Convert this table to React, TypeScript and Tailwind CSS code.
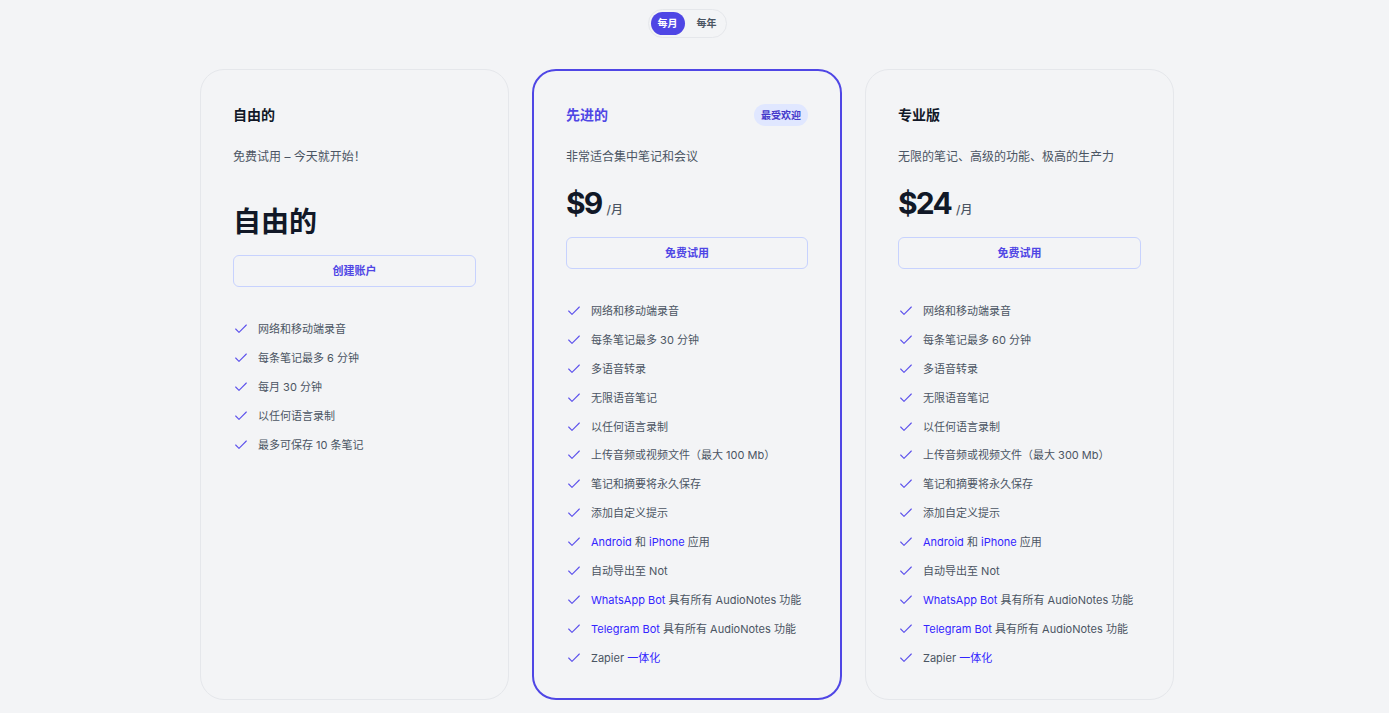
import React from "react";

type Part = { t: string; link?: boolean };
type Feature = Part[];

const f = (s: string): Feature => [{ t: s }];

const freeFeatures: Feature[] = [
  f("网络和移动端录音"),
  f("每条笔记最多 6 分钟"),
  f("每月 30 分钟"),
  f("以任何语言录制"),
  f("最多可保存 10 条笔记"),
];

const makePaid = (mins: string, mb: string): Feature[] => [
  f("网络和移动端录音"),
  f(`每条笔记最多 ${mins} 分钟`),
  f("多语音转录"),
  f("无限语音笔记"),
  f("以任何语言录制"),
  f(`上传音频或视频文件（最大 ${mb} Mb）`),
  f("笔记和摘要将永久保存"),
  f("添加自定义提示"),
  [
    { t: "Android", link: true },
    { t: " 和 " },
    { t: "iPhone", link: true },
    { t: " 应用" },
  ],
  f("自动导出至 Not"),
  [{ t: "WhatsApp Bot", link: true }, { t: " 具有所有 AudioNotes 功能" }],
  [{ t: "Telegram Bot", link: true }, { t: " 具有所有 AudioNotes 功能" }],
  [{ t: "Zapier " }, { t: "一体化", link: true }],
];

function CheckIcon() {
  return (
    <svg
      width="16"
      height="16"
      viewBox="0 0 24 24"
      fill="none"
      stroke="#5b50ec"
      strokeWidth="1.6"
      strokeLinecap="round"
      strokeLinejoin="round"
      className="shrink-0"
    >
      <path d="M20 6 9 17l-5-5" />
    </svg>
  );
}

function FeatureList({ items, mt }: { items: Feature[]; mt: string }) {
  return (
    <ul className={`${mt} flex flex-col gap-[8.9px]`}>
      {items.map((parts, i) => (
        <li key={i} className="flex items-center gap-[9px] leading-5 text-[11px] text-[#4b5563]">
          <CheckIcon />
          <span>
            {parts.map((p, j) =>
              p.link ? (
                <span key={j} className="text-[#3325ff]">
                  {p.t}
                </span>
              ) : (
                <span key={j}>{p.t}</span>
              )
            )}
          </span>
        </li>
      ))}
    </ul>
  );
}

function Button({ label }: { label: string }) {
  return (
    <button className="w-full h-8 rounded-md border border-[#c7d2fe] text-[11px] font-semibold text-[#4f46e5] bg-transparent">
      {label}
    </button>
  );
}

function Price({ amount }: { amount: string }) {
  return (
    <div className="mt-[19px] flex items-baseline h-9">
      <span className="text-[30px] leading-9 font-bold text-[#111827] tracking-[-0.06em]">{amount}</span>
      <span className="ml-[5px] text-xs font-medium text-[#4b5563]">/月</span>
    </div>
  );
}

export default function App() {
  return (
    <div
      className="min-h-screen w-full bg-[#f3f4f6] pr-[15px] pt-[9px] pb-[15px]"
      style={{ fontFamily: 'Inter, "Noto Sans CJK SC", sans-serif' }}
    >
      <div className="flex justify-center">
        <div className="flex items-center rounded-full border border-[#e5e7eb] bg-[#f3f4f6] p-[2px] pr-[9px] h-[29px]">
          <div className="h-[23px] px-[7px] rounded-full bg-[#4f46e5] text-white text-[10px] font-bold flex items-center">
            每月
          </div>
          <div className="pl-3 text-[10px] font-bold text-[#4b5563]">每年</div>
        </div>
      </div>

      <div className="mt-[31px] flex justify-center items-stretch gap-[23px]">
        {/* Free */}
        <div className="w-[309px] rounded-3xl border border-[#e5e7eb] px-8 pt-[33px] pb-[30px]">
          <div className="h-6 flex items-center text-sm font-bold text-[#111827]">自由的</div>
          <p className="mt-[21px] text-xs leading-[18px] text-[#4b5563]">免费试用 – 今天就开始！</p>
          <div className="mt-[38px] text-[28px] leading-9 font-bold text-[#111827]">自由的</div>
          <div className="mt-[15px]">
            <Button label="创建账户" />
          </div>
          <FeatureList items={freeFeatures} mt="mt-8" />
        </div>

        {/* Advanced */}
        <div className="w-[310px] rounded-3xl border-2 border-[#4f46e5] px-8 pt-[32px] pb-[30px]">
          <div className="h-6 flex items-center justify-between">
            <span className="text-sm font-bold text-[#4f46e5]">先进的</span>
            <span className="h-[22px] px-[7px] rounded-full bg-[#e0e7ff] text-[10px] font-semibold text-[#4338ca] flex items-center">
              最受欢迎
            </span>
          </div>
          <p className="mt-[21px] text-xs leading-[18px] text-[#4b5563]">非常适合集中笔记和会议</p>
          <Price amount="$9" />
          <div className="mt-4">
            <Button label="免费试用" />
          </div>
          <FeatureList items={makePaid("30", "100")} mt="mt-8" />
        </div>

        {/* Pro */}
        <div className="w-[309px] rounded-3xl border border-[#e5e7eb] px-8 pt-[33px] pb-[30px]">
          <div className="h-6 flex items-center text-sm font-bold text-[#111827]">专业版</div>
          <p className="mt-[21px] text-xs leading-[18px] text-[#4b5563]">无限的笔记、高级的功能、极高的生产力</p>
          <Price amount="$24" />
          <div className="mt-4">
            <Button label="免费试用" />
          </div>
          <FeatureList items={makePaid("60", "300")} mt="mt-8" />
        </div>
      </div>
    </div>
  );
}
